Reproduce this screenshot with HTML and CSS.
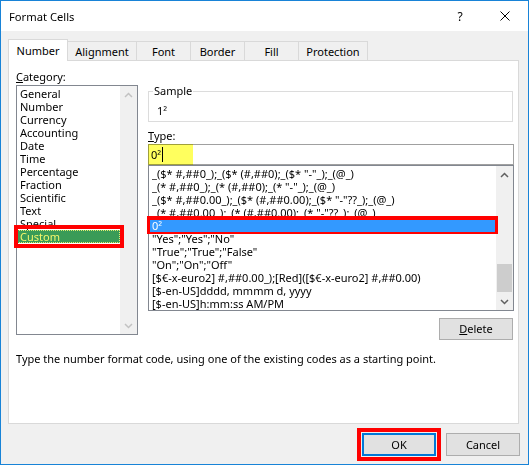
FILE: index.html
```html
<!DOCTYPE html>
<html>
<head>
<meta charset="utf-8">
<link rel="stylesheet" href="styles.css">
</head>
<body>
<div class="window">
  <div class="titlebar">
    <span class="title">Format Cells</span>
    <span class="help">?</span>
    <span class="close"><svg width="10" height="10" viewBox="0 0 10 10"><path d="M0.5 0.5 L9.5 9.5 M9.5 0.5 L0.5 9.5" stroke="#000" stroke-width="1" fill="none"/></svg></span>
  </div>
  <div class="tabs">
    <div class="tab active w60">Number</div>
    <div class="tab w70">Alignment</div>
    <div class="tab w55">Font</div>
    <div class="tab w55">Border</div>
    <div class="tab w55">Fill</div>
    <div class="tab w70">Protection</div>
  </div>
  <div class="panel">
    <div class="cols">
      <div class="left">
        <div class="label"><u>C</u>ategory:</div>
        <div class="listbox cat">
          <div class="items">
            <div class="row">General</div>
            <div class="row">Number</div>
            <div class="row">Currency</div>
            <div class="row">Accounting</div>
            <div class="row">Date</div>
            <div class="row">Time</div>
            <div class="row">Percentage</div>
            <div class="row">Fraction</div>
            <div class="row">Scientific</div>
            <div class="row">Text</div>
            <div class="row">Special</div>
            <div class="row custom">Custom</div>
          </div>
          <div class="sb">
            <div class="sb-btn"><svg width="9" height="6" viewBox="0 0 9 6"><path d="M1 5 L4.5 1.5 L8 5" fill="none" stroke="#c2c2c2" stroke-width="1.5"/></svg></div>
            <div class="sb-track"></div>
            <div class="sb-btn"><svg width="9" height="6" viewBox="0 0 9 6"><path d="M1 1 L4.5 4.5 L8 1" fill="none" stroke="#c2c2c2" stroke-width="1.5"/></svg></div>
          </div>
          <div class="mark mark-cat"></div>
        </div>
      </div>
      <div class="right">
        <fieldset class="sample">
          <legend>Sample</legend>
          <div class="sample-val">1²</div>
        </fieldset>
        <div class="label type-label"><u>T</u>ype:</div>
        <div class="input">0²<span class="caret"></span><span class="hl"></span></div>
        <div class="listbox fmt">
          <div class="items">
            <div class="row">_($* #,##0_);_($* (#,##0);_($* "-"_);_(@_)</div>
            <div class="row">_(* #,##0_);_(* (#,##0);_(* "-"_);_(@_)</div>
            <div class="row">_($* #,##0.00_);_($* (#,##0.00);_($* "-"??_);_(@_)</div>
            <div class="row">_(* #,##0.00_);_(* (#,##0.00);_(* "-"??_);_(@_)</div>
            <div class="row sel">0²</div>
            <div class="row">"Yes";"Yes";"No"</div>
            <div class="row">"True";"True";"False"</div>
            <div class="row">"On";"On";"Off"</div>
            <div class="row">[$€-x-euro2] #,##0.00_);[Red]([$€-x-euro2] #,##0.00)</div>
            <div class="row">[$-en-US]dddd, mmmm d, yyyy</div>
            <div class="row">[$-en-US]h:mm:ss AM/PM</div>
          </div>
          <div class="sb">
            <div class="sb-btn"><svg width="9" height="6" viewBox="0 0 9 6"><path d="M1 5 L4.5 1.5 L8 5" fill="none" stroke="#606060" stroke-width="1.5"/></svg></div>
            <div class="sb-track"><div class="thumb"></div></div>
            <div class="sb-btn"><svg width="9" height="6" viewBox="0 0 9 6"><path d="M1 1 L4.5 4.5 L8 1" fill="none" stroke="#606060" stroke-width="1.5"/></svg></div>
          </div>
          <div class="mark mark-fmt"></div>
        </div>
        <div class="delete-row"><button class="btn"><u>D</u>elete</button></div>
      </div>
    </div>
    <div class="desc">Type the number format code, using one of the existing codes as a starting point.</div>
  </div>
  <div class="actions">
    <div class="ok-mark"><button class="btn ok">OK</button></div>
    <button class="btn">Cancel</button>
  </div>
</div>
</body>
</html>
```
FILE: styles.css
```css
html, body {
  margin: 0;
  padding: 0;
}
body {
  width: 529px;
  height: 465px;
  overflow: hidden;
  font-family: "Noto Sans", "Open Sans", sans-serif;
  font-size: 11px;
  color: #000;
  background: #fff;
}
.window {
  box-sizing: border-box;
  width: 529px;
  height: 465px;
  border: 1px solid #1883d7;
  background: #f0f0f0;
  display: flex;
  flex-direction: column;
}
.titlebar {
  flex: none;
  height: 30px;
  background: #fff;
  display: flex;
  align-items: center;
  padding-left: 8px;
}
.title {
  flex: 1;
  font-size: 11.2px;
}
.help {
  width: 30px;
  margin-right: 7px;
  text-align: center;
  font-size: 12px;
}
.close {
  width: 46px;
  height: 30px;
  display: flex;
  align-items: center;
  justify-content: center;
}
.close svg {
  display: block;
}

/* tabs */
.tabs {
  flex: none;
  display: flex;
  align-items: flex-end;
  height: 21px;
  margin-top: 8px;
  padding-left: 7px;
  position: relative;
  z-index: 1;
}
.tab {
  box-sizing: border-box;
  height: 19px;
  border: 1px solid #d9d9d9;
  border-bottom: 0;
  margin-left: -1px;
  text-align: center;
  line-height: 17px;
  padding-top: 1px;
  background: #f0f0f0;
}
.tab:first-child {
  margin-left: 0;
}
.tab.active {
  height: 22px;
  margin-bottom: -1px;
  padding-top: 2px;
  background: #fff;
}
.w60 { width: 60px; }
.w55 { width: 55px; }
.w70 { width: 70px; }

/* panel */
.panel {
  flex: none;
  box-sizing: border-box;
  margin-left: 7px;
  width: 511px;
  height: 364px;
  background: #fff;
  border: 1px solid #d9d9d9;
  padding: 8px 0 0 7px;
}
.cols {
  display: flex;
  gap: 10px;
}
.left {
  width: 122px;
}
.right {
  width: 366px;
}
.label {
  height: 16px;
  line-height: 15px;
}
.listbox {
  position: relative;
  box-sizing: border-box;
  border: 1px solid #828790;
  background: #fff;
  display: flex;
}
.cat {
  height: 250px;
}
.fmt {
  height: 146px;
}
.items {
  flex: 1;
  min-width: 0;
  padding-top: 1px;
  overflow: hidden;
}
.row {
  height: 13px;
  line-height: 13px;
  padding-left: 3px;
  white-space: nowrap;
}
.row.custom {
  background: #3a9b57;
  color: #f2f56b;
  outline: 1px dotted #e4ec70;
  outline-offset: -1px;
}
.row.sel {
  background: #3399ff;
  color: #fff;
}
.sb {
  flex: none;
  width: 17px;
  background: #f0f0f0;
  display: flex;
  flex-direction: column;
}
.sb-btn {
  height: 17px;
  display: flex;
  align-items: center;
  justify-content: center;
}
.sb-btn svg {
  display: block;
}
.sb-track {
  flex: 1;
}
.thumb {
  margin: 81px 1px 0 1px;
  height: 28px;
  background: #cdcdcd;
}
.mark {
  position: absolute;
  box-sizing: border-box;
  border: 4px solid #ff0000;
  pointer-events: none;
}
.mark-cat {
  left: -3px;
  top: 139px;
  width: 110px;
  height: 23px;
}
.mark-fmt {
  left: -2px;
  top: 50px;
  width: 351px;
  height: 18px;
  border-width: 4px 3px 2px 3px;
}

/* sample */
.sample {
  box-sizing: border-box;
  width: 365px;
  margin: 15px 0 0 0;
  padding: 0 4px 3px 4px;
  border: 1px solid #dcdcdc;
  min-width: 0;
}
.sample legend {
  padding: 0 1px;
  line-height: 14px;
}
.sample-val {
  margin-top: 6px;
  padding-left: 4px;
  line-height: 14px;
}
.type-label {
  margin-top: 6px;
}
.input {
  position: relative;
  box-sizing: border-box;
  height: 21px;
  border: 1px solid #a0a0a0;
  padding-left: 2px;
  line-height: 19px;
  background: #fff;
}
.caret {
  display: inline-block;
  width: 1px;
  height: 15px;
  margin-left: 1px;
  background: #000;
  vertical-align: -3px;
}
.hl {
  position: absolute;
  left: -1px;
  top: -1px;
  width: 45px;
  height: 21px;
  background: #ffff5e;
  mix-blend-mode: multiply;
}
.delete-row {
  display: flex;
  justify-content: flex-end;
  margin-top: 7px;
  padding-right: 1px;
}
.btn {
  box-sizing: border-box;
  width: 74px;
  height: 22px;
  padding: 0;
  margin: 0;
  border: 1px solid #adadad;
  background: #e1e1e1;
  font-family: inherit;
  font-size: inherit;
  color: #000;
  line-height: 18px;
}
.desc {
  margin-top: 11px;
  line-height: 15px;
}

/* bottom buttons */
.actions {
  flex: none;
  display: flex;
  justify-content: flex-end;
  align-items: center;
  gap: 5px;
  margin-top: 4px;
  padding-right: 8px;
}
.actions .btn {
  height: 23px;
}
.ok-mark {
  border: 4px solid #ff0000;
  padding: 1px;
}
.btn.ok {
  display: block;
  border: 2px solid #0078d7;
}
```
